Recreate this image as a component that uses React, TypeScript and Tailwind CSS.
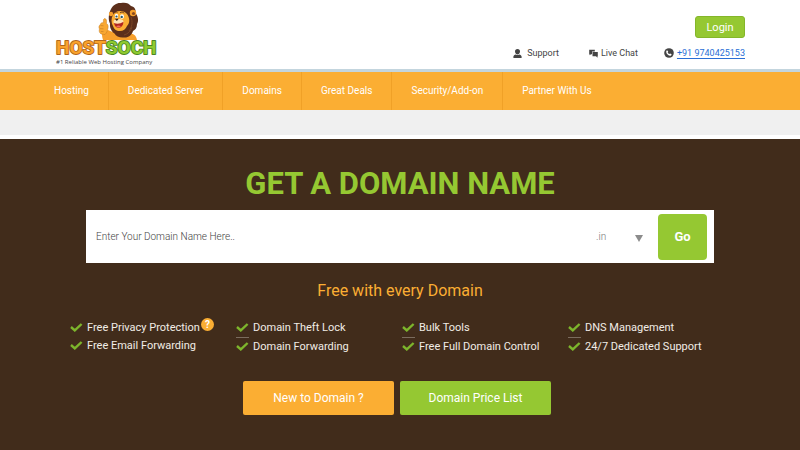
import React from 'react';

const navItems = ['Hosting', 'Dedicated Server', 'Domains', 'Great Deals', 'Security/Add-on', 'Partner With Us'];

const features = [
  { items: ['Free Privacy Protection', 'Free Email Forwarding'], help: true, divider: false },
  { items: ['Domain Theft Lock', 'Domain Forwarding'], help: false, divider: true },
  { items: ['Bulk Tools', 'Free Full Domain Control'], help: false, divider: true },
  { items: ['DNS Management', '24/7 Dedicated Support'], help: false, divider: true },
];

export default function App() {
  return (
    <div className="min-h-screen flex flex-col bg-white font-['Roboto',sans-serif]">
      <Header />
      <Navbar />
      <div className="h-[25px] bg-[#f0f0f0]" />
      <DomainSearch />
    </div>
  );
}

function Header() {
  return (
    <header className="flex justify-between h-[72px] pl-[54px] pr-[55px] border-b-3 border-[#c3d5de]">
      <a href="#home" className="block">
        <Logo />
      </a>
      <div className="flex flex-col items-end justify-between pt-4 pb-2">
        <button className="h-[22px] w-[50px] rounded-[3px] border border-[#84b62a] bg-[#95c832] text-[11px] leading-none text-white">
          Login
        </button>
        <div className="flex items-center text-[9px] leading-4 text-[#444]">
          <a href="#support" className="flex items-center gap-[5px] mr-[30px]">
            <SupportIcon />
            Support
          </a>
          <a href="#chat" className="flex items-center gap-[3px] mr-[26px]">
            <ChatIcon />
            Live Chat
          </a>
          <a href="tel:+919740425153" className="flex items-center gap-[3px] text-[#2a6fd6]">
            <PhoneIcon />
            <span className="underline underline-offset-2">+91 9740425153</span>
          </a>
        </div>
      </div>
    </header>
  );
}

function Navbar() {
  return (
    <nav className="bg-[#fbae33] pl-[35px]">
      <ul className="flex">
        {navItems.map((item) => (
          <li key={item} className="border-r border-[#f0a127] last:border-r-0">
            <a href="#" className="block px-[19px] text-[10px] leading-[38px] text-white">
              {item}
            </a>
          </li>
        ))}
      </ul>
    </nav>
  );
}

function DomainSearch() {
  return (
    <main className="mt-1 flex-1 bg-[#412c1b] px-[66px] pt-[26px] pb-8">
      <h1 className="text-center text-[31px] leading-[38px] font-bold text-[#95c832]">GET A DOMAIN NAME</h1>

      <form className="mx-5 mt-[7px] flex items-center bg-white h-[53px] pl-[10px] pr-[7px]">
        <input
          type="text"
          aria-label="Domain name"
          placeholder="Enter Your Domain Name Here.."
          className="flex-1 min-w-0 text-[10px] font-light text-[#444] placeholder:text-[#444] outline-none"
        />
        <div className="relative mr-[15px] flex w-[47px]">
          <select
            aria-label="Extension"
            className="w-full appearance-none bg-transparent text-[10px] font-light text-[#777] outline-none"
          >
            <option>.in</option>
            <option>.com</option>
            <option>.net</option>
          </select>
          <svg className="pointer-events-none absolute right-0 top-1/2 -mt-[3px] size-2" viewBox="0 0 8 8" fill="#8c8c8c">
            <path d="M0 1h8L4 8z" />
          </svg>
        </div>
        <button type="button" className="h-[46px] w-[49px] rounded-[4px] bg-[#95c832] text-[13px] font-bold text-white">
          Go
        </button>
      </form>

      <h2 className="mt-[18px] text-center text-base leading-5 text-[#fbae33]">Free with every Domain</h2>

      <div className="mt-[18px] ml-1 grid grid-cols-4">
        {features.map((group) => (
          <ul key={group.items[0]} className="text-[11px] leading-[18px] text-[#f1ece6]">
            <li className="flex whitespace-nowrap">
              <Check />
              {group.items[0]}
              {group.help && <HelpBadge />}
            </li>
            {group.divider && <li className="h-px w-[13px] bg-[#7b6c5e]" />}
            <li className="flex whitespace-nowrap">
              <Check />
              {group.items[1]}
            </li>
          </ul>
        ))}
      </div>

      <div className="mt-[25px] flex justify-center gap-[6px] pr-[6px]">
        <button className="h-[34px] w-[151px] rounded-[2px] bg-[#fbae33] text-xs text-white">New to Domain ?</button>
        <button className="h-[34px] w-[151px] rounded-[2px] bg-[#95c832] text-xs text-white">Domain Price List</button>
      </div>
    </main>
  );
}

function Check() {
  return (
    <svg className="mt-1 mr-1 h-[9px] w-[13px] shrink-0" viewBox="0 0 13 9" fill="none">
      <path d="M1 4 4.800 7.400 11.600 1" stroke="#7db52c" strokeWidth="2.400" />
    </svg>
  );
}

function HelpBadge() {
  return (
    <span className="ml-px -mt-px flex size-[13px] items-center justify-center rounded-full bg-[#fbae33] text-[10px] leading-none font-bold text-white">
      ?
    </span>
  );
}

function SupportIcon() {
  return (
    <svg className="h-[9px] w-[9px]" viewBox="0 0 9 9" fill="#444">
      <path d="M4.5 0C6.200 0 7 1 7 2.400S6 5.500 4.500 5.500 2 3.900 2 2.400 2.800 0 4.500 0z" />
      <path d="M.4 9V7.600C.4 6.300 1.600 5.900 2.700 5.400c.8.800 2.800.8 3.600 0 1.100.5 2.300.9 2.300 2.200V9z" />
    </svg>
  );
}

function ChatIcon() {
  return (
    <svg className="h-[9px] w-[9px]" viewBox="0 0 9 9" fill="#444">
      <path d="M.2.8h5.600v1.600H3v2.900H2L.6 6.300V5.200H.2z" />
      <path d="M3.500 2.900h5.300v4.400h-.3v1.500L7 7.300H3.500z" />
    </svg>
  );
}

function PhoneIcon() {
  return (
    <svg className="h-[10px] w-[10px]" viewBox="0 0 10 10">
      <circle cx="5" cy="5" r="4.800" fill="#444" />
      <path
        d="M3.1 2.2 4.2 3.6l-.5.8c.3.7.9 1.3 1.7 1.7l.8-.6 1.5 1c-.3.9-1 1.3-1.8 1.2C3.900 7.400 2.300 5.600 2.200 3.700c0-.7.3-1.200.9-1.500z"
        fill="#fff"
      />
    </svg>
  );
}

function Logo() {
  return (
    <svg className="h-[69px] w-[104px]" viewBox="0 0 104 69" role="img" aria-label="HostSoch">
      {/* Body and raised thumb */}
      <path d="M49 40c-1-3-1-5-1-7l6-3c4 2 7 3 12 3h8c5 0 8 2 9 7z" fill="#f7a02c" />
      <path
        d="M47 34c-2-1.500-2-3.500-1.500-5-1-1.500-.6-3.500.7-4.200.3-1.700 1.500-2.200 3-2 .5-1.500-.3-3.500 1.200-4.200 2-.3 2.400 2 2 4.800 1.600.8 2 2.600 1.600 4.600-.5 3-1.500 5-3 6.500z"
        fill="#f9a832"
        stroke="#c07a22"
        strokeWidth=".5"
      />
      <path d="M46.500 25.500l3 .3M46 28.700l3.500.1M46.800 31.500l2.700.1" stroke="#c07a22" strokeWidth=".6" />
      {/* Mane */}
      <path
        d="M57 9c2-4 6-6.500 10-6 4-1 8 0 10 3 4 1 5 4 4.500 7 2.500 3 3.500 8 1.500 11 0 4-2 6-4 7-1 4-5 7-9 6.500-4 .5-8-1-9.500-4-3-2-5-6-4.500-10-2-4-1.500-10 1-14.500z"
        fill="#5c2f1b"
      />
      <path d="M77 17c2 5 1 10-2 14M70 35c4-1 7-4 8-8" stroke="#7a4526" strokeWidth="1" fill="none" />
      {/* Ears */}
      <circle cx="57" cy="14" r="2.200" fill="#f7a02c" />
      <circle cx="79" cy="13" r="3.200" fill="#f7a02c" />
      <circle cx="79.500" cy="13.500" r="1.600" fill="#8a4a1f" />
      {/* Face */}
      <path d="M59 15c2-5 11-5 14-1 3 4 3 9 0 12-1 3-4 5-7 5-4 0-6-2-7-5-2-3-2-8 0-11z" fill="#fbae33" />
      <ellipse cx="62.500" cy="16" rx="1.700" ry="2.200" fill="#fff" />
      <ellipse cx="68" cy="16.500" rx="2" ry="2.300" fill="#fff" />
      <circle cx="62.500" cy="16.500" r="1.100" fill="#26566a" />
      <circle cx="67.700" cy="16.900" r="1.200" fill="#26566a" />
      <path d="M60.500 13c1-1 2-1.200 3-.5M66 12.800c1.500-1 3-.8 4.200.4" stroke="#5c2f1b" strokeWidth=".8" fill="none" />
      <ellipse cx="64.500" cy="21.800" rx="5" ry="2.800" fill="#fde3b5" />
      <path d="M60.800 18.800h4l-2 2.300z" fill="#3a2013" />
      <path d="M60 23c3 1.300 6.500.8 9.500-1.200-.3 4-2.300 6-5 6-2.500 0-4-1.800-4.500-4.800z" fill="#b3261f" />
      <path d="M62 26.200c1.500-1 3.500-1 5 0-1.500 1.500-3.500 1.600-5 0z" fill="#ef6a62" />
      {/* Wordmark */}
      <text
        x="2"
        y="54"
        fontFamily="Roboto, sans-serif"
        fontSize="19"
        fontWeight="700"
        strokeWidth="1.800"
        paintOrder="stroke"
        strokeLinejoin="round"
      >
        <tspan fill="#f9a22b" stroke="#b0661c">HOST</tspan>
        <tspan fill="#8fcb2f" stroke="#4a8424">SOCH</tspan>
      </text>
      <text x="2" y="64" fontFamily="'Open Sans', sans-serif" fontSize="6" fill="#444">
        #1 Reliable Web Hosting Company
      </text>
    </svg>
  );
}
